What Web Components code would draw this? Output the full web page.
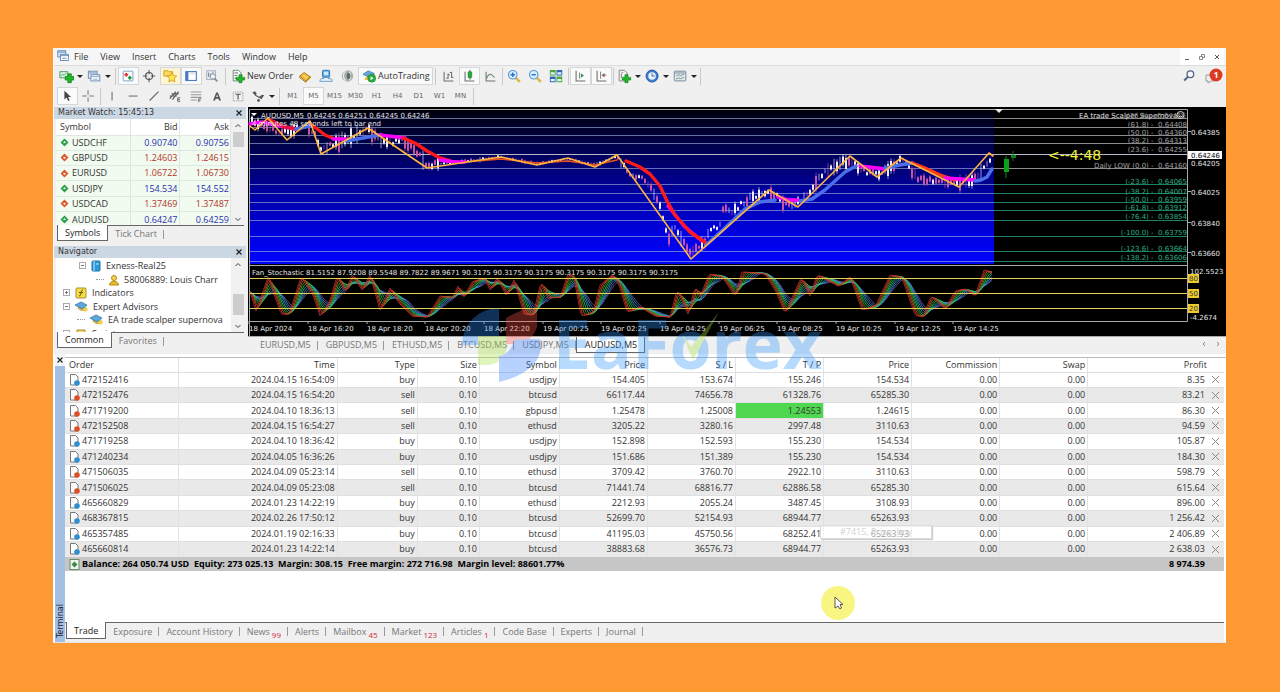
<!DOCTYPE html>
<html lang="en">
<head>
<meta charset="utf-8">
<title>Trading terminal</title>
<style>
html,body{margin:0;height:100%}
body{background:#ff9933;font:9px/12px "Open Sans","Noto Sans",sans-serif;color:#333;display:flex;box-sizing:border-box;padding:48px 54px 49px 53px;min-height:100%}
mt-app{flex:1;min-width:0}
</style>
</head>
<body>
<mt-app></mt-app>
<script>
const base = `<style>
*{box-sizing:border-box}
button{font:inherit;color:inherit;background:none;border:0;padding:0;margin:0;display:inline-flex;align-items:center;justify-content:center;white-space:nowrap}
svg{display:block;flex:none}
table{border-collapse:collapse;table-layout:fixed;width:100%;border-spacing:0}
th{font-weight:400}
th,td{padding:0;white-space:nowrap;overflow:hidden}
</style>`;

function define(name, html, setup) {
  customElements.define(name, class extends HTMLElement {
    constructor() {
      super();
      const t = document.createElement('template');
      t.innerHTML = base + html;
      this.attachShadow({mode: 'open'}).append(t.content.cloneNode(true));
    }
    connectedCallback() { if (setup && !this.ready) { this.ready = true; setup(this, this.shadowRoot); } }
  });
}

/* ---------- icons ---------- */
const plus = '<path d="M10 5.500h4v3h3v4h-3v3h-4v-3H7v-4h3z" fill="#22b52a" stroke="#0b7d17" stroke-width=".8"/>';
const person = c => `<path d="M3 12.500c0-3 2-4.500 5-4.500s5 1.500 5 4.500z" fill="${c}"/><path d="M2 6l6-3 6 3-6 3z" fill="${c}" stroke="#2868a0" stroke-width=".6"/>`;
const I = {
  app:'<rect x="2" y="2" width="9" height="7" fill="#dfeaf5" stroke="#5b86b5"/><rect x="5" y="6" width="9" height="7" fill="#fff" stroke="#5b86b5"/><path d="M2 3.500h9M5 7.500h9M7 10.500h5" stroke="#5b86b5"/>',
  newchart:'<path d="M1 3h9v7H1z" fill="#dff0df" stroke="#4b8d59"/><path d="M2 8l2-2 2 1 3-3" stroke="#2b6" fill="none"/>'+plus,
  windows:'<rect x="1.500" y="2.500" width="10" height="8" fill="#e4edf7" stroke="#6485ad"/><path d="M2 4.500h9" stroke="#6485ad"/><rect x="4.500" y="6.500" width="10" height="7" fill="#f5f9ff" stroke="#6485ad"/><path d="M5 8.500h9M7 11.500h5" stroke="#8ba5c5"/>',
  market:'<rect x="2.500" y="2.500" width="11" height="11" rx="1" fill="#fff" stroke="#7596bd"/><path d="M3.500 6.500L6 4l2.500 2.500L6 9z" fill="#d33"/><path d="M7.500 10L10 7.500l2.500 2.500-2.500 2.500z" fill="#1a9c3c"/>',
  target:'<circle cx="8" cy="8" r="4" fill="none" stroke="#555" stroke-width="1.200"/><path d="M8 1v5M8 10v5M1 8h5M10 8h5" stroke="#555" stroke-width="1.200"/>',
  star:'<path d="M1 2h5l1 1h4v5H1z" fill="#ffd95c" stroke="#c89a1d"/><path d="M10 4l1.700 3.500 3.800.5-2.700 2.700.6 4-3.400-1.800-3.400 1.800.6-4L4.500 8l3.800-.5z" fill="#ffe34f" stroke="#c28d0a" stroke-width=".8"/>',
  panel:'<rect x="2" y="3" width="12" height="10" fill="#fff" stroke="#4f79c0" stroke-width="1.300"/><path d="M2 3h3v10H2z" fill="#4f79c0"/><path d="M7 5.500h5" stroke="#b9cbe8"/>',
  tester:'<rect x="2" y="2" width="10" height="10" fill="#e8edf2" stroke="#9cabbb"/><path d="M4 4v5M6 5v5M9 3v4" stroke="#778"/><circle cx="9" cy="8.500" r="3" fill="#eef6fa" stroke="#7b8b99"/><path d="M11 11l3 3" stroke="#8b8b8b" stroke-width="2"/>',
  order:'<path d="M2.500 1.500h6l3 3v9h-9z" fill="#f6fbf6" stroke="#5e8564"/><path d="M4 4.500h4M4 7.500h3M4 10.500h3" stroke="#555"/><path d="M9 6.500h3.500V9.500h3v3h-3v3H9v-3H6v-3h3z" fill="#22b52a" stroke="#0b7d17" stroke-width=".7"/>',
  book:'<path d="M2 8l5-4 7 5-5 5z" fill="#f4bd3a" stroke="#a8720a"/><path d="M2 8v2l7 5v-1.500M9 14l5-4V8.500" fill="none" stroke="#a8720a"/><path d="M6 7l4 3" stroke="#fff1b5"/>',
  vps:'<rect x="4" y="1.500" width="8" height="8" rx="1" fill="#5aa7e0" stroke="#2c6ba7"/><rect x="5.500" y="3" width="5" height="4" fill="#c9ebff"/><path d="M1 14c0-3 2-4 4-3 1-2 5-2 6 0 3-.5 4 .5 4 3z" fill="#e6f2fb" stroke="#5f95c4"/>',
  signal:'<circle cx="8.500" cy="8" r="6.500" fill="#a9b1ac"/><path d="M6.500 2.500c-3 1-4 8 0 11M10.500 3.500c2 2 2 7 0 9" stroke="#e8eeea" fill="none" stroke-width="1.300"/><path d="M9 4c4 1 4 7 0 8-2-2-2-6 0-8z" fill="#5f6b65"/>',
  auto:person('#edc23e')+'<path d="M1 6l6-4 7 3-6 4z" fill="#62a8dc" stroke="#2868a0" stroke-width=".6"/><circle cx="11" cy="10.500" r="4.500" fill="#28ad39" stroke="#118224" stroke-width=".6"/><path d="M9.700 8.200v4.600l3.400-2.300z" fill="#fff"/>',
  bars:'<path d="M3.500 3v10.500H14M8 5v6M8 6.500h2M12 3v7M12 4h-2M12 9.500h2M6 10.500h2" fill="none" stroke="#6a6f6a" stroke-width="1.200"/>',
  candles:'<path d="M3.500 3v10.500H14" fill="none" stroke="#6a6f6a" stroke-width="1.200"/><path d="M9 1v11" stroke="#137524"/><rect x="7" y="3" width="4" height="7" rx="1" fill="#22ad3a" stroke="#137524" stroke-width=".7"/>',
  line:'<path d="M3.500 3v10.500H14" fill="none" stroke="#6a6f6a" stroke-width="1.200"/><path d="M4 11c2-6 5-7 9-1" fill="none" stroke="#6a8a70" stroke-width="1.200"/>',
  zin:'<path d="M10 10l4.500 4.500" stroke="#e0b63a" stroke-width="2.800"/><circle cx="6.500" cy="6.500" r="4.800" fill="#d6efff" stroke="#5a98d0" stroke-width="1.300"/><path d="M6.500 4v5M4 6.500h5" stroke="#286cc0" stroke-width="1.500"/>',
  zout:'<path d="M10 10l4.500 4.500" stroke="#e0b63a" stroke-width="2.800"/><circle cx="6.500" cy="6.500" r="4.800" fill="#d6efff" stroke="#5a98d0" stroke-width="1.300"/><path d="M4 6.500h5" stroke="#286cc0" stroke-width="1.500"/>',
  tile:'<path d="M1 1h6.500v6.500H1zM8.500 8.500H15V15H8.500z" fill="#49a93b"/><path d="M8.500 1H15v6.500H8.500zM1 8.500h6.500V15H1z" fill="#3366b5"/><path d="M2 5h4.500M9.500 5H14M2 12.500h4.500M9.500 12.500H14" stroke="#dff3ff" stroke-width="2.500"/>',
  scroll:'<path d="M3.500 2v11.500H14" fill="none" stroke="#6a6f6a" stroke-width="1.200"/><path d="M7.500 4v7" stroke="#6a6f6a"/><path d="M9 5v5l3.500-2.500z" fill="#2c8f58"/>',
  shift:'<path d="M3.500 2v11.500H14" fill="none" stroke="#6a6f6a" stroke-width="1.200"/><path d="M7.500 3v8M9 7h5" stroke="#6a6f6a"/><path d="M12 4.500v5L9 7z" fill="#9b4c4c"/>',
  indic:'<path d="M2.500 1.500h6l3 3v9h-9z" fill="#f2f2f2" stroke="#7d7d7d"/><path d="M5 10V6c0-2 1-2 2-2" fill="none" stroke="#777"/><path d="M9 6.500h3.500V9.500h3v3h-3v3H9v-3H6v-3h3z" fill="#22b52a" stroke="#0b7d17" stroke-width=".7"/>',
  clock:'<circle cx="8" cy="8" r="6.800" fill="#3a7cd0" stroke="#1f4f98"/><circle cx="8" cy="8" r="4.300" fill="#e9f4ff"/><path d="M8 5v3h3" fill="none" stroke="#29568e"/>',
  tmpl:'<rect x="1.500" y="2.500" width="13" height="11" rx="1" fill="#e4eaf0" stroke="#6c7f92"/><path d="M2 4.500h12" stroke="#6c7f92"/><path d="M3.500 8l3-1.500 2 1 4-1.500M3.500 11.500l3-1.500 2 1 4-1.500" fill="none" stroke="#6f8b87"/>',
  cursor:'<path d="M5 2v10l2.500-2.300L9.200 13.500l1.700-.8-1.700-3.600h3.300z" fill="#444"/>',
  cross:'<path d="M8 1.500v5M8 9.500v5M1.500 8h5M9.500 8h5" stroke="#777" stroke-width="1.200"/>',
  vline:'<path d="M8 3v10" stroke="#777" stroke-width="1.300"/>',
  hline:'<path d="M3 8h10" stroke="#777" stroke-width="1.300"/>',
  trend:'<path d="M3 13L13 3" stroke="#666" stroke-width="1.300"/>',
  channel:'<path d="M2 11L9 3M5 12l7-9M2 8h8M4 5.500h8" stroke="#555" stroke-width="1.200"/><path d="M14 10h-3v4h3M11 12h2.500" fill="none" stroke="#555"/>',
  fibo:'<path d="M2 3.500h12M2 6.500h12M2 9.500h12M2 12.500h7" stroke="#999" stroke-width="1.200"/><path d="M14 11h-3v4M11 13h2" fill="none" stroke="#666"/>',
  text:'<path d="M3.500 13L7 4h2l3.500 9h-2.300l-.6-2H6.400l-.6 2zM7 9.200h2L8 6z" fill="#555"/>',
  label:'<rect x="2.500" y="3.500" width="11" height="10" fill="none" stroke="#888" stroke-dasharray="1 1"/><path d="M5 6h6M8 6v6" stroke="#555" stroke-width="1.300"/>',
  arrows:'<path d="M1.500 4l3-1.500 2 2.500-1.500 3-1.500-2zM9 9l2.500 3L15 7l-2.500-.5z" fill="#555"/><path d="M5 7l5 3" stroke="#555" stroke-width="1.300"/><circle cx="8.500" cy="13" r="1.600" fill="#555"/>',
  search:'<circle cx="9.500" cy="6" r="3.800" fill="#f4f8fc" stroke="#4e6484" stroke-width="1.400"/><path d="M6.500 9L2.500 13" stroke="#4e6484" stroke-width="2.200"/>'
};
const svg = (n, s = 15) => `<svg width="${s}" height="${s}" viewBox="0 0 17 17" aria-hidden="true">${I[n]}</svg>`;

define('mt-tool', `<style>
:host{display:flex}
button{width:21px;height:18px}
:host([menu]) button{width:28px;gap:3px}
:host([wide]) button{width:auto;gap:1px;padding:0 2px 0 3px}
:host([on]) button{background:#fafafa;border:1px solid #d3d7da}
:host([hot]) button{background:#fff4d2}
i{border:3px solid transparent;border-top-color:#222;border-bottom:0}
:host([period]) button{color:#666;font:7px/12px "DejaVu Sans","Open Sans",sans-serif}
</style><button type="button"><slot></slot></button>`, (h, r) => {
  const b = r.querySelector('button'), n = h.getAttribute('icon');
  if (n) { b.insertAdjacentHTML('afterbegin', svg(n)); if (!h.textContent) b.setAttribute('aria-label', n); }
  if (h.hasAttribute('menu')) b.insertAdjacentHTML('beforeend', '<i></i>');
});

const tool = (n, a = '', t = '') => `<mt-tool icon="${n}" ${a}>${t}</mt-tool>`;

define('mt-menubar', `<style>
:host{display:flex;align-items:center;height:18px;background:#f6f6f6;padding:0 2px;border-bottom:1px solid #dcdcdc;gap:3px}
nav{display:flex;gap:12px}
.win{margin-left:auto;display:flex;gap:1px;background:#fff;height:100%}
.win button{width:14px;color:#666}
</style>${svg('app')}<nav>${['File','View','Insert','Charts','Tools','Window','Help'].map(t=>`<button type="button">${t}</button>`).join('')}</nav>
<div class="win"><button type="button" aria-label="Minimize"><svg width="8" height="8"><path d="M2 6.500h4" stroke="#666"/></svg></button><button type="button" aria-label="Restore"><svg width="8" height="8"><path d="M1.500 3.500h3v3h-3zM3.500 3V1.500h3v3H5" fill="none" stroke="#888"/></svg></button><button type="button" aria-label="Close"><svg width="8" height="8"><path d="M2 2l4 4M6 2L2 6" stroke="#555"/></svg></button></div>`);

define('mt-toolbars', `<style>
:host{display:block;background:#f0f0f0}
.row{display:flex;align-items:center;height:20px;padding-left:3px}
hr{width:1px;height:17px;border:0;margin:0 2px;background:#c9c9c9}
.draw hr:first-of-type,hr~hr~hr~hr{margin:0 1px}
.end{margin-left:auto;display:flex;align-items:center;gap:5px;padding-right:3px}
</style>
<div class="row">${tool('newchart','menu')}${tool('windows','menu')}<hr>${tool('market','on')}${tool('target')}${tool('star','on hot')}${tool('panel','on')}${tool('tester')}<hr>${tool('order','wide','New Order')}${tool('book')}${tool('vps')}${tool('signal')}${tool('auto','wide on','AutoTrading')}<hr>${tool('bars')}${tool('candles','on')}${tool('line')}<hr>${tool('zin')}${tool('zout')}${tool('tile')}<hr>${tool('scroll','on')}${tool('shift','on')}<hr>${tool('indic','menu')}${tool('clock','menu')}${tool('tmpl','menu')}<hr>
<div class="end">${tool('search')}<button type="button" aria-label="1 message"><svg width="18" height="16" viewBox="0 0 18 16"><path d="M1 7h8v6H6l-3 2v-2H1z" fill="#eee" stroke="#999"/><circle cx="11" cy="7" r="6.500" fill="#dd3a22"/><text x="11" y="10" font-size="9" font-weight="700" text-anchor="middle" fill="#fff">1</text></svg></button></div></div>
<div class="row draw">${tool('cursor','on')}${tool('cross')}<hr>${['vline','hline','trend','channel','fibo','text','label'].map(n=>tool(n)).join('')}${tool('arrows','menu')}<hr>${['M1','M5','M15','M30','H1','H4','D1','W1','MN'].map(t=>`<mt-tool period ${t==='M5'?'on':''}>${t}</mt-tool>`).join('')}<hr></div>`);

define('mt-tabs', `<style>
:host{display:flex;border-top:1px solid #666;height:18px;color:#777;background:#f0f0f0}
button{height:16px;padding:0 7px;position:relative;gap:2px}
button:not(.on)::after{content:"";position:absolute;right:0;top:4px;height:9px;width:1px;background:#999}
.on{background:#fff;color:#222;border:1px solid #666;border-top:0;margin-top:-1px}
:host([big]){border-top:0;padding-left:4px}
:host([big]) button{padding:0 7px 0 8px}
:host([big]) .on{margin-top:0}
:host([tall]) button{height:17px;padding:1px 7px 0}
sub{color:#d0283a;font-size:8px;line-height:8px;vertical-align:baseline;padding-top:5px}
</style>`, (h, r) => {
  h.setAttribute('role', 'tablist');
  h.getAttribute('items').split('|').forEach((t, i) => {
    const b = document.createElement('button'), [name, n] = t.split(':');
    const on = i === +h.getAttribute('active');
    b.type = 'button'; b.setAttribute('role', 'tab'); b.setAttribute('aria-selected', on);
    if (on) b.className = 'on';
    b.innerHTML = `<span>${name}</span>` + (n ? `<sub>${n}</sub>` : '');
    r.append(b);
  });
});

define('mt-panel', `<style>
:host{display:flex;flex-direction:column;min-height:0}
header{display:flex;align-items:center;justify-content:space-between;height:12px;background:#ccd7e4;padding:0 3px 0 4px;font:8px/12px "DejaVu Sans","Open Sans",sans-serif;color:#333}
.body{display:grid;grid-template-columns:1fr 14px;overflow:hidden;background:#fff;margin:0 1px 0 2px;height:var(--h)}
.bar{background:#f1f1f1;display:flex;flex-direction:column;align-items:center;justify-content:space-between;position:relative}
.bar i{position:absolute;left:2px;right:1px;top:var(--top);height:var(--thumb);background:#cdcdcd}
.clip{overflow:hidden;min-height:0}
</style><header><span></span><button type="button" aria-label="Close"><svg width="8" height="8"><path d="M1.500 1.500l5 5M6.500 1.500l-5 5" stroke="#222" stroke-width="1.200"/></svg></button></header>
<div class="body"><div class="clip"><slot></slot></div><div class="bar"><svg width="8" height="12"><path d="M1.500 8L4 5.500 6.500 8" fill="none" stroke="#444"/></svg><i></i><svg width="8" height="12"><path d="M1.500 5L4 7.500 6.500 5" fill="none" stroke="#444"/></svg></div></div><slot name="tabs"></slot>`,
(h, r) => r.querySelector('span').textContent = h.getAttribute('heading'));

const quotes = [['USDCHF','0.90740','0.90756',1],['GBPUSD','1.24603','1.24615',0],['EURUSD','1.06722','1.06730',0],['USDJPY','154.534','154.552',1],['USDCAD','1.37469','1.37487',0],['AUDUSD','0.64247','0.64259',1]];
define('mt-quotes', `<style>
:host{display:block}
table{height:108px}
th,td{text-align:right;padding-right:1px;border-right:1px solid #dfe6df}
th{height:16px}
td{background:#f1fbf0;border-top:1px solid #dfe9df;height:15px}
th:first-child,td:first-child{text-align:left;padding-left:4px}
.sym{display:flex;align-items:center;gap:3px}
.up{color:#2b2fb0}.down{color:#b3352b}
</style><table><colgroup><col style="width:74px"><col style="width:49px"><col></colgroup><thead><tr><th>Symbol</th><th>Bid</th><th>Ask</th></tr></thead><tbody>${quotes.map(([s,b,a,u])=>`<tr><td><span class="sym"><svg width="9" height="9"><path d="M4.500.5l4 4-4 4-4-4z" fill="${u?'#2f9e4f':'#dc5a2f'}"/><path d="${u?'M4.500 3L6 5H3z':'M4.500 6L6 4H3z'}" fill="#fff"/></svg>${s}</span></td><td class="${u?'up':'down'}">${b}</td><td class="${u?'up':'down'}">${a}</td></tr>`).join('')}</tbody></table>`);

const exp = s => `<svg width="7" height="7"><rect x=".5" y=".5" width="6" height="6" fill="#fff" stroke="#aaa"/><path d="M2 3.500h3${s==='+'?'M3.500 2v3':''}" stroke="#777"/></svg>`;
const hat = '<svg width="15" height="12" viewBox="0 0 15 12"><path d="M4 6c0 4 8 5 9 1z" fill="#efc23b" stroke="#ad8117" stroke-width=".6"/><path d="M1 4l6-3 6 3-5 4z" fill="#5ca7dc" stroke="#296ca3" stroke-width=".7"/><path d="M9 8l3-2 2 3-3 2z" fill="#f2d04c"/></svg>';
define('mt-tree', `<style>
:host{display:block;padding-top:1px}
ul{list-style:none;margin:0;padding:0}
li{display:flex;align-items:center;gap:4px;height:13px;margin-bottom:1px;white-space:nowrap}
li:nth-child(2n){margin-bottom:0}
.l0{padding-left:7px}.l1{padding-left:23px}.l2{padding-left:21px}.l3{padding-left:40px}
.sq{gap:5px}
u{width:8px;border-bottom:1px dotted #999}
</style><ul>
<li class="l1">${exp('-')}<svg width="12" height="12"><rect x="2" y="1" width="8" height="10" rx="1" fill="#2c9bd8" stroke="#1771a9"/><path d="M4 1v10M6 4h3" stroke="#bfe7fb"/></svg>Exness-Real25</li>
<li class="l3"><u></u><svg width="12" height="12"><circle cx="6" cy="4" r="2.500" fill="#f6d25b" stroke="#b58a12"/><path d="M1.500 11c0-5 9-5 9 0z" fill="#e9b92c" stroke="#b58a12"/></svg>58006889: Louis Charr</li>
<li class="l0 sq">${exp('+')}<svg width="12" height="12"><rect x="1" y="1" width="10" height="10" rx="1" fill="#f7dc49" stroke="#a4902f"/><path d="M8 3c-3 0-1 6-4 6M4 5.500h4" fill="none" stroke="#665400"/></svg>Indicators</li>
<li class="l0">${exp('-')}${hat}Expert Advisors</li>
<li class="l2"><u></u>${hat}EA trade scalper supernova</li>
<li class="l0 sq">${exp('+')}<svg width="12" height="12"><path d="M2 2h8v3H5v6H3V5H2z" fill="#efd36c" stroke="#ac8b27"/></svg>Scripts</li></ul>`);

/* ---------- chart ---------- */
const zig = [[250,126],[255,130],[268,118],[287,140],[310,121],[321,154],[368,128],[427,168],[501,157],[537,165],[568,158],[595,167],[617,155],[691,259],[769,190],[798,207],[850,156],[877,177],[901,158],[959,187],[989,153],[993,156]];
const price = [[250,122],[262,124],[280,133],[292,131],[308,124],[321,147],[332,145],[345,140],[368,129],[380,143],[405,141],[418,152],[427,165],[445,163],[465,161],[501,157],[537,164],[568,159],[595,165],[617,156],[628,174],[642,176],[651,188],[662,212],[668,240],[674,228],[680,236],[691,252],[697,247],[703,246],[712,228],[720,226],[722,208],[733,213],[740,204],[750,198],[760,194],[772,193],[785,203],[798,203],[812,188],[828,168],[850,160],[866,173],[877,174],[901,160],[920,180],[945,183],[959,184],[975,178],[983,168],[993,157]];
const sto = [[250,292],[256,311],[268,277],[281,314],[289,314],[301,277],[313,295],[320,316],[330,300],[337,276],[345,292],[352,275],[362,290],[370,275],[380,310],[390,288],[398,302],[412,316],[427,317],[440,296],[452,298],[458,286],[463,298],[472,282],[484,278],[490,290],[497,278],[506,295],[514,280],[524,314],[533,315],[541,282],[548,298],[560,297],[568,274],[574,278],[581,316],[593,312],[600,285],[612,275],[619,285],[627,312],[640,307],[655,316],[670,317],[677,290],[688,314],[695,287],[700,297],[709,274],[722,277],[735,296],[742,272],[765,274],[776,292],[785,313],[801,278],[810,296],[817,275],[838,286],[850,277],[862,310],[876,305],[890,275],[902,278],[915,315],[923,317],[931,296],[945,309],[955,291],[965,289],[975,296],[984,270],[994,274]];
const at = (p, x) => { let i = 1; while (i < p.length - 1 && p[i][0] < x) i++; const [a, b] = [p[i-1], p[i]]; return a[1] + (b[1]-a[1]) * Math.max(0, Math.min(1, (x-a[0])/(b[0]-a[0]))); };
let seed = 7; const rnd = () => (seed = (seed*16807) % 2147483647) / 2147483647;
const bars = () => { let s = ''; for (let x = 252; x < 993; x += 3) { const calm = x > 440 && x < 620, y = at(price, x) + (rnd()-.5)*(calm ? 1 : 5), h = (calm ? 1 : 2) + rnd()*rnd()*(calm ? 2 : 10), up = at(price, x+3) < at(price, x-3), c = rnd() < (up ? .7 : .25) ? '#ffffff' : '#d85aa8'; s += `<path d="M${x} ${(y-h).toFixed(1)}V${(y+h).toFixed(1)}" stroke="${c}" stroke-width=".6"/>`; if (rnd() > .3) s += `<path d="M${x} ${(y-h/1.500).toFixed(1)}V${(y+h/1.500).toFixed(1)}" stroke="${c}" stroke-width="1.800"/>`; } return s; };
const stoch = () => ['#6a58a8','#4b7fe0','#3aa0d8','#27b8a8','#29d04a','#2faa3a','#b07020','#f02f1f','#a33'].map((c, i) => { const w = (8-i)*2.4; let d = ''; for (let x = 250; x <= 993; x += 2) { let t = 0; for (let k = 0; k < 5; k++) t += at(sto, Math.max(250, x - w*k/4)); d += (d ? 'L' : 'M') + x + ' ' + (t/5).toFixed(1); } return `<path d="${d}" stroke="${c}"/>`; }).join('');
const grid = [119,128,136,144,155,169,185,194,203,211,221,237,252,262];
const ma = [['#f0f','250,124 262,122 285,127 296,129'],['#e8103a','268,119 285,127 296,129'],['#4a6fe8','296,129 310,126'],['#ff1a1a','312,125 325,135 335,139'],['#f0f','333,139 346,139'],['#4a6fe8','346,141 380,135'],['#f0f','380,135 405,138'],['#ff1a1a','403,138 415,143 427,151 440,158 450,161'],['#f0f','440,160 455,162 465,162'],['#e8501a','465,162 501,159 537,163 568,161 595,165 617,160'],['#f0f','668,206 684,226 702,241'],['#ff1a1a','626,161 640,167 650,174 660,186 667,201 675,215 690,232 706,243'],['#4a6fe8','706,245 725,228 745,209 760,202 775,200'],['#f0f','778,197 788,200 798,200'],['#4a6fe8','800,201 812,199 825,190 845,172 856,166'],['#f0f','860,166 885,169'],['#4a6fe8','885,168 900,165 912,163'],['#ff3a1a','912,163 925,168 940,175 955,180'],['#f0f','945,178 975,180'],['#4a6fe8','975,181 981,180 987,177 992,169']];
const lv = [['(61.8) -  0.64408',124],['(50.0) -  0.64360',132],['(38.2) -  0.64313',140],['(23.6) -  0.64255',149],['Daily LOW (0.0) -  0.64160',165],['(-23.6) -  0.64065',181],['(-38.2) -  0.64007',191],['(-50.0) -  0.63959',199],['(-61.8) -  0.63912',207],['(-76.4) -  0.63854',216],['(-100.0) -  0.63759',232],['(-123.6) -  0.63664',248],['(-138.2) -  0.63606',257]];
const times = ['18 Apr 2024','18 Apr 16:20','18 Apr 18:20','18 Apr 20:20','18 Apr 22:20','19 Apr 00:25','19 Apr 02:25','19 Apr 04:25','19 Apr 06:25','19 Apr 08:25','19 Apr 10:25','19 Apr 12:25','19 Apr 14:25'];
const fan = ['81.5152','87.9208','89.5548','89.7822','89.9671',...Array(7).fill('90.3175')];
define('mt-chart', `<style>
:host{display:block}
svg{width:100%;height:auto;background:#000}
text{font:7px "DejaVu Sans","Open Sans",sans-serif;fill:#e4e4e4;white-space:pre}
.lv text{text-anchor:end}
</style>
<svg viewBox="248 107 978 230" role="img" aria-label="AUDUSD five minute chart">
<defs><linearGradient id="sky" x1="0" y1="0" x2="0" y2="1"><stop offset="0" stop-color="#00000c"/><stop offset=".25" stop-color="#000050"/><stop offset=".5" stop-color="#000098"/><stop offset=".8" stop-color="#0000e0"/><stop offset="1" stop-color="#0004ff"/></linearGradient></defs>
<rect x="250" y="110" width="744" height="154" fill="url(#sky)"/>
<g stroke-width="1">${grid.map((y,i)=>`<path d="M250 ${y-.5}H994" stroke="#8ea2d0" opacity=".7"/><path d="M994 ${y-.5}H1187" stroke="${i<6?'#8c8c8c':'#1f7f62'}"/>`).join('')}
<path d="M250 154.500H1187" stroke="#b8b8c8"/></g>
<path d="M249.500 336V109.500H1187.500V321.500H250M250 265.500H1187" fill="none" stroke="#aaa"/>
<path d="M248 336.500H1226" stroke="#aaa"/>
<path d="M995 109h8l-4 4z" fill="#eee"/>
${bars()}
<g fill="none" stroke-linecap="round" stroke-linejoin="round">${ma.map(([c,p])=>`<polyline points="${p}" stroke="${c}" stroke-width="${c==='#e8501a'?1.5:3.4}"/>`).join('')}
<polyline points="${zig.join(' ')}" stroke="#ffb43c" stroke-width="1.600"/></g>
<g fill="none" stroke-width=".8">${stoch()}</g>
<path d="M250 278.500H1187M250 293.500H1187M250 308.500H1187" stroke="#e8cf55"/>
<path d="M1006 156v22" stroke="#0a8f1a"/><path d="M1004 159h5v13h-5z" fill="#0aa01a"/><path d="M1013 151v10" stroke="#0a7f1a"/><path d="M1011 155h5v3h-5z" fill="#0a7f1a"/>
<path d="M251 113h6l-3 3z" fill="#fff"/><text x="261" y="118">AUDUSD,M5</text><text x="307" y="118">0.64245 0.64251 0.64245 0.64246</text>
<text x="252" y="126">4 minutes 48 seconds left to bar end</text>
<text x="1079" y="118">EA trade Scalper Supernova</text><circle cx="1180.500" cy="115" r="3.500" fill="none" stroke="#ddd"/><path d="M1178.500 116q2 2 4 0M1179 114h.8M1181.500 114h.8" stroke="#ddd" fill="none"/>
<text x="1048" y="160" style="font:14px 'DejaVu Sans',sans-serif;fill:#f2f235">&lt;--4:48</text>
<g class="lv"><text x="1186" y="118" style="fill:#888">(76.4) -  0.64466</text>${lv.map(([t,y])=>`<text x="1187" y="${y+3}" style="fill:${y<170?'#a0a0a0':'#2fae82'}">${t}</text>`).join('')}</g>
<path d="M1188 131.500h3M1188 191.500h3M1188 222.500h3M1188 252.500h3" stroke="#aaa"/>
${[['0.64385',132],['0.64205',163],['0.64025',192],['0.63840',223],['0.63660',253]].map(([t,y])=>`<text x="1191" y="${y+3}">${t}</text>`).join('')}
<rect x="1188" y="151" width="34" height="8" fill="#fff"/><text x="1191" y="158" style="fill:#000">0.64246</text>
<text x="1190" y="274">102.5523</text><text x="1190" y="320">-4.2674</text>
${[[80,278],[50,293],[20,308]].map(([t,y])=>`<rect x="1188" y="${y-4}" width="11" height="9" fill="#f0cb2e"/><text x="1189" y="${y+3}" style="fill:#333">${t}</text>`).join('')}
<text x="252" y="275">Fan_Stochastic</text><text x="306" y="275">${fan.join(' ')}</text>
${times.map((t,i)=>`<path d="M${249+i*59-Math.floor(i/3)} 321v3" stroke="#aaa"/><text x="${249+i*59-Math.floor(i/3)}" y="331">${t}</text>`).join('')}
</svg>`);

/* ---------- terminal ---------- */
const orders = `472152416,2024.04.15 16:54:09,buy,usdjpy,154.405,153.674,155.246,154.534,8.35
472152476,2024.04.15 16:54:20,sell,btcusd,66117.44,74656.78,61328.76,65285.30,83.21
471719200,2024.04.10 18:36:13,sell,gbpusd,1.25478,1.25008,1.24553,1.24615,86.30
472152508,2024.04.15 16:54:27,sell,ethusd,3205.22,3280.16,2997.48,3110.63,94.59
471719258,2024.04.10 18:36:42,buy,usdjpy,152.898,152.593,155.230,154.534,105.87
471240234,2024.04.05 16:36:26,buy,usdjpy,151.686,151.389,155.230,154.534,184.30
471506035,2024.04.09 05:23:14,sell,ethusd,3709.42,3760.70,2922.10,3110.63,598.79
471506025,2024.04.09 05:23:08,sell,btcusd,71441.74,68816.77,62886.58,65285.30,615.64
465660829,2024.01.23 14:22:19,buy,ethusd,2212.93,2055.24,3487.45,3108.93,896.00
468367815,2024.02.26 17:50:12,buy,btcusd,52699.70,52154.93,68944.77,65263.93,1 256.42
465357485,2024.01.19 02:16:33,buy,btcusd,41195.03,45750.56,68252.41,65263.93,2 406.89
465660814,2024.01.23 14:22:14,buy,btcusd,38883.68,36576.73,68944.77,65263.93,2 638.03`.split('\n').map(l => l.split(','));
define('mt-terminal', `<style>
:host{display:grid;grid-template-columns:11px 1fr;background:#fff}
aside{background:#a3c0e2;display:flex;flex-direction:column;justify-content:space-between;align-items:center;margin-left:1px}
aside button{background:#f4f6f8;width:100%;height:12px}
aside span{writing-mode:vertical-rl;transform:rotate(180deg);font:9px/10px "DejaVu Sans Condensed","Open Sans",sans-serif;padding-top:4px;color:#223}
main{display:flex;flex-direction:column;padding-right:2px;border-top:1px solid #bbb;margin-top:3px;min-width:0}
table{height:213px;flex:none}
th,td{text-align:right;padding-right:2px;border-right:1px solid #e2e2e2}
th{height:14px}
th:nth-child(12){padding-right:0}
tbody td{height:15px}
th:first-child,td:first-child{text-align:left;padding-left:4px}
td{border-top:1px solid #e0e0e0}
tbody tr:nth-child(2n){background:#e9e9e9}
tbody td:nth-child(12),tbody td:nth-child(13),th:nth-child(n+12){border-right:0}
.id{display:flex;align-items:center;gap:2px}
.hit{background:#4fd84f}
td button{display:flex;margin-left:auto;padding-right:2px}
tfoot td{background:#c6c6c6;font-weight:700;color:#000;border:0;height:14px}
mt-tabs{margin-top:auto;height:20px;padding-left:1px}
</style>
<aside><button type="button" aria-label="Close"><svg width="8" height="8"><path d="M1.500 1.500l5 5M6.500 1.500l-5 5" stroke="#222" stroke-width="1.200"/></svg></button><span>Terminal</span></aside>
<main><table><colgroup>${[113,159,80,62,80,88,88,88,88,88,88,119,17].map(w=>`<col style="width:${w}px">`).join('')}</colgroup>
<thead><tr>${['Order','Time','Type','Size','Symbol','Price','S / L','T / P','Price','Commission','Swap','Profit'].map(t=>`<th>${t}</th>`).join('')}<th></th></tr></thead>
<tbody>${orders.map(([id,time,type,sym,p,sl,tp,cur,profit])=>`<tr><td><span class="id"><svg width="11" height="12"><path d="M1.500.5h5l2.500 2.500v8h-7.500z" fill="#fdfdfd" stroke="#777"/><circle cx="8" cy="9" r="2.800" fill="${type==='buy'?'#2d8fd0':'#dc4f26'}"/></svg>${id}</span></td><td>${time}</td><td>${type}</td><td>0.10</td><td>${sym}</td><td>${p}</td><td>${sl}</td><td${tp==='1.24553'?' class="hit"':''}>${tp}</td><td>${cur}</td><td>0.00</td><td>0.00</td><td>${profit}</td><td><button type="button" aria-label="Close order"><svg width="9" height="9"><path d="M1 1l7 7M8 1L1 8" stroke="#888"/></svg></button></td></tr>`).join('')}</tbody>
<tfoot><tr><td colspan="11"><span class="id"><svg width="11" height="11"><rect x="1" y=".5" width="9" height="10" fill="#eef5ee" stroke="#688b68"/><path d="M5.500 2.500l3 3-3 3-3-3z" fill="#3b8a45"/></svg><span>Balance: 264 050.74 USD&nbsp; Equity: 273 025.13&nbsp; Margin: 308.15&nbsp; Free margin: 272 716.98&nbsp; Margin level: 88601.77%</span></span></td><td>8 974.39</td><td></td></tr></tfoot></table>
<mt-tabs tall active="0" items="Trade|Exposure|Account History|News:99|Alerts|Mailbox:45|Market:123|Articles:1|Code Base|Experts|Journal"></mt-tabs></main>`);

define('mt-watermark', `<style>
:host{display:block;pointer-events:none}
svg{overflow:visible}
text{font:700 68px "Open Sans",sans-serif}
</style><svg width="360" height="76" viewBox="462 308 360 76" aria-hidden="true"><g opacity=".34">
<path d="M462 345a37 37 0 0 1 37-37v37z" fill="#2f8fff"/><path d="M506 318q20-12 31-9v18q-4 14-20 17h-11z" fill="#ff5248"/><path d="M478 336h28v14q-4 15-20 15h-8z" fill="#a4e43c"/><path d="M514 340q24-2 27 0v4q0 28-42 38v-26q12-2 15-16z" fill="#2f7dff"/>
<text x="553" y="369" fill="#2f95ff">EaForex</text><path d="M682 334l9 13 28-35-26 48z" fill="#a4e43c"/></g></svg>`);

define('mt-pointer', `<style>
:host{display:block;pointer-events:none}</style><svg width="34" height="34"><circle cx="17" cy="17" r="17" fill="#f9f582"/><path d="M14 11v11l3-2 2 3 1.500-1-1.500-3.500h3z" fill="#fff" stroke="#555"/></svg>`);

define('mt-app', `<style>
:host{display:flex;flex-direction:column;position:relative;background:#f0f0f0;border-left:1px solid #fff;border-bottom:1px solid #e4e4e4}
.work{display:grid;grid-template-columns:192px 1fr;column-gap:2px;margin:1px 0}
.left{display:flex;flex-direction:column;gap:3px}
.chart{min-width:0}
.nav{display:flex;align-items:flex-start}
.nav mt-tabs{flex:1;height:16px}
.left mt-tabs{height:18px;margin:0 2px 0 3px}
mt-terminal{flex:1}
mt-watermark{position:absolute;left:408px;top:260px}
mt-pointer{position:absolute;left:767px;bottom:22px}
.tip{position:absolute;left:766px;top:477px;width:112px;height:14px;border:1px solid #dcdcdc;background:#ffffff80;color:#d4d4d4;text-align:center;white-space:nowrap;overflow:hidden;box-shadow:1px 1px 1px #ccc}
</style>
<mt-menubar></mt-menubar><mt-toolbars></mt-toolbars>
<div class="work"><div class="left">
<mt-panel heading="Market Watch: 15:45:13" style="--h:106px;--top:13px;--thumb:15px"><mt-quotes></mt-quotes><mt-tabs slot="tabs" active="0" items="Symbols|Tick Chart"></mt-tabs></mt-panel>
<mt-panel heading="Navigator" style="--h:74px;--top:36px;--thumb:21px"><mt-tree></mt-tree><mt-tabs slot="tabs" active="0" items="Common|Favorites"></mt-tabs></mt-panel>
</div><div class="chart"><mt-chart></mt-chart><div class="nav"><mt-tabs big active="5" items="EURUSD,M5|GBPUSD,M5|ETHUSD,M5|BTCUSD,M5|USDJPY,M5|AUDUSD,M5"></mt-tabs><svg width="30" height="16"><path d="M9 5L7 7l2 2M21 5l2 2-2 2" fill="none" stroke="#888"/></svg></div></div></div>
<mt-terminal></mt-terminal><div class="tip">#7415, Price: buy</div><mt-watermark></mt-watermark><mt-pointer></mt-pointer>`);
</script>
</body>
</html>
